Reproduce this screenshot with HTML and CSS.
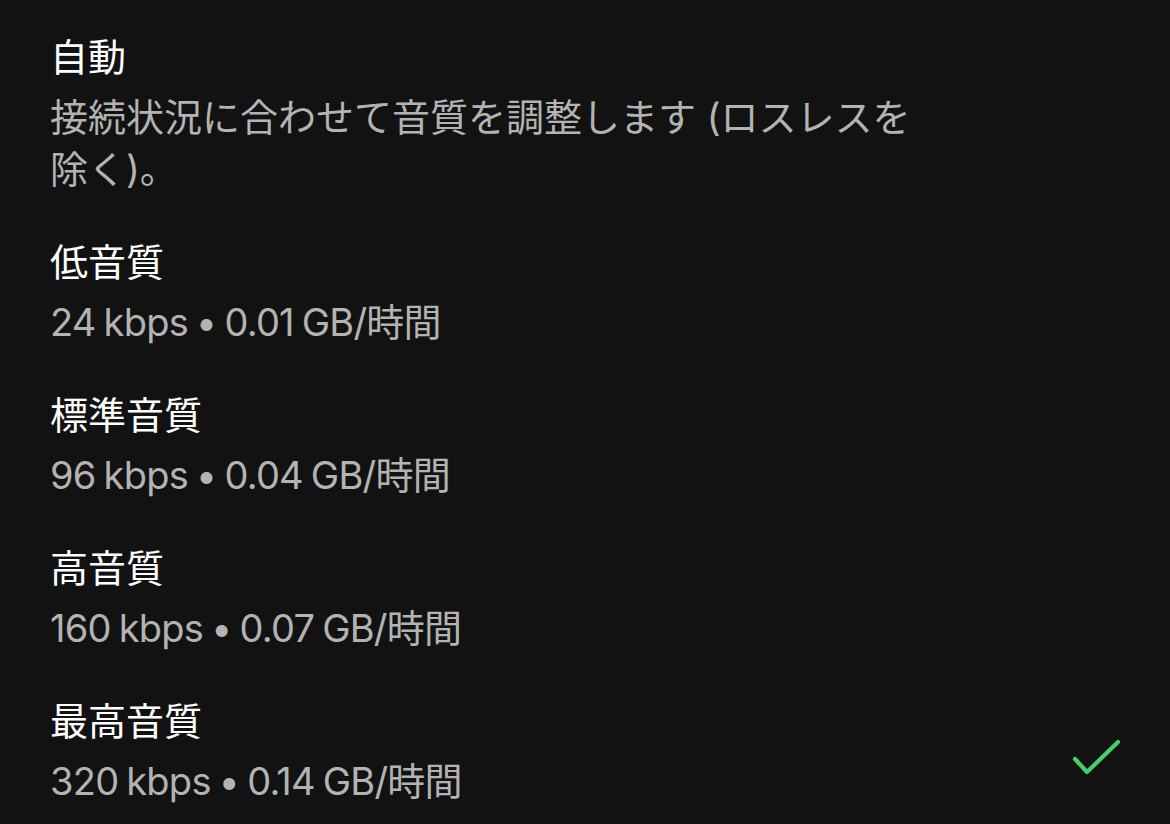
FILE: index.html
```html
<!DOCTYPE html>
<html lang="ja">
<head>
<meta charset="utf-8">
<link rel="stylesheet" href="styles.css">
</head>
<body>
<ul class="list">
  <li class="item">
    <div class="text">
      <div class="title">自動</div>
      <div class="sub">接続状況に合わせて音質を調整します (ロスレスを除く)。</div>
    </div>
  </li>
  <li class="item">
    <div class="text">
      <div class="title">低音質</div>
      <div class="sub meta">24 kbps • 0.01 GB/時間</div>
    </div>
  </li>
  <li class="item">
    <div class="text">
      <div class="title">標準音質</div>
      <div class="sub meta">96 kbps • 0.04 GB/時間</div>
    </div>
  </li>
  <li class="item">
    <div class="text">
      <div class="title">高音質</div>
      <div class="sub meta">160 kbps • 0.07 GB/時間</div>
    </div>
  </li>
  <li class="item">
    <div class="text">
      <div class="title">最高音質</div>
      <div class="sub meta">320 kbps • 0.14 GB/時間</div>
    </div>
    <svg class="check" width="52" height="40" viewBox="0 0 52 40">
      <polyline points="5,19 17,32 48,2" fill="none" stroke="#44d068" stroke-width="4.2" stroke-linecap="round" stroke-linejoin="round"/>
    </svg>
  </li>
</ul>
</body>
</html>
```
FILE: styles.css
```css
html, body {
  margin: 0;
  padding: 0;
  background: #121212;
  width: 1170px;
  height: 824px;
  overflow: hidden;
}
body {
  font-family: "Inter", "Noto Sans CJK JP", sans-serif;
  -webkit-font-smoothing: antialiased;
}
.list {
  list-style: none;
  margin: 0;
  padding: 31px 48px 0 50px;
  display: flex;
  flex-direction: column;
  gap: 41px;
}
.item {
  display: flex;
  align-items: center;
  justify-content: space-between;
}
.text {
  width: 880px;
  display: flex;
  flex-direction: column;
  gap: 8px;
}
.title {
  color: #ffffff;
  font-size: 38px;
  line-height: 52px;
}
.sub {
  color: #b3b3b3;
  font-size: 38px;
  line-height: 52px;
}
.meta {
  letter-spacing: -0.02em;
  word-spacing: -2px;
}
.check {
  display: block;
  flex: none;
  margin-top: 18px;
}
```
